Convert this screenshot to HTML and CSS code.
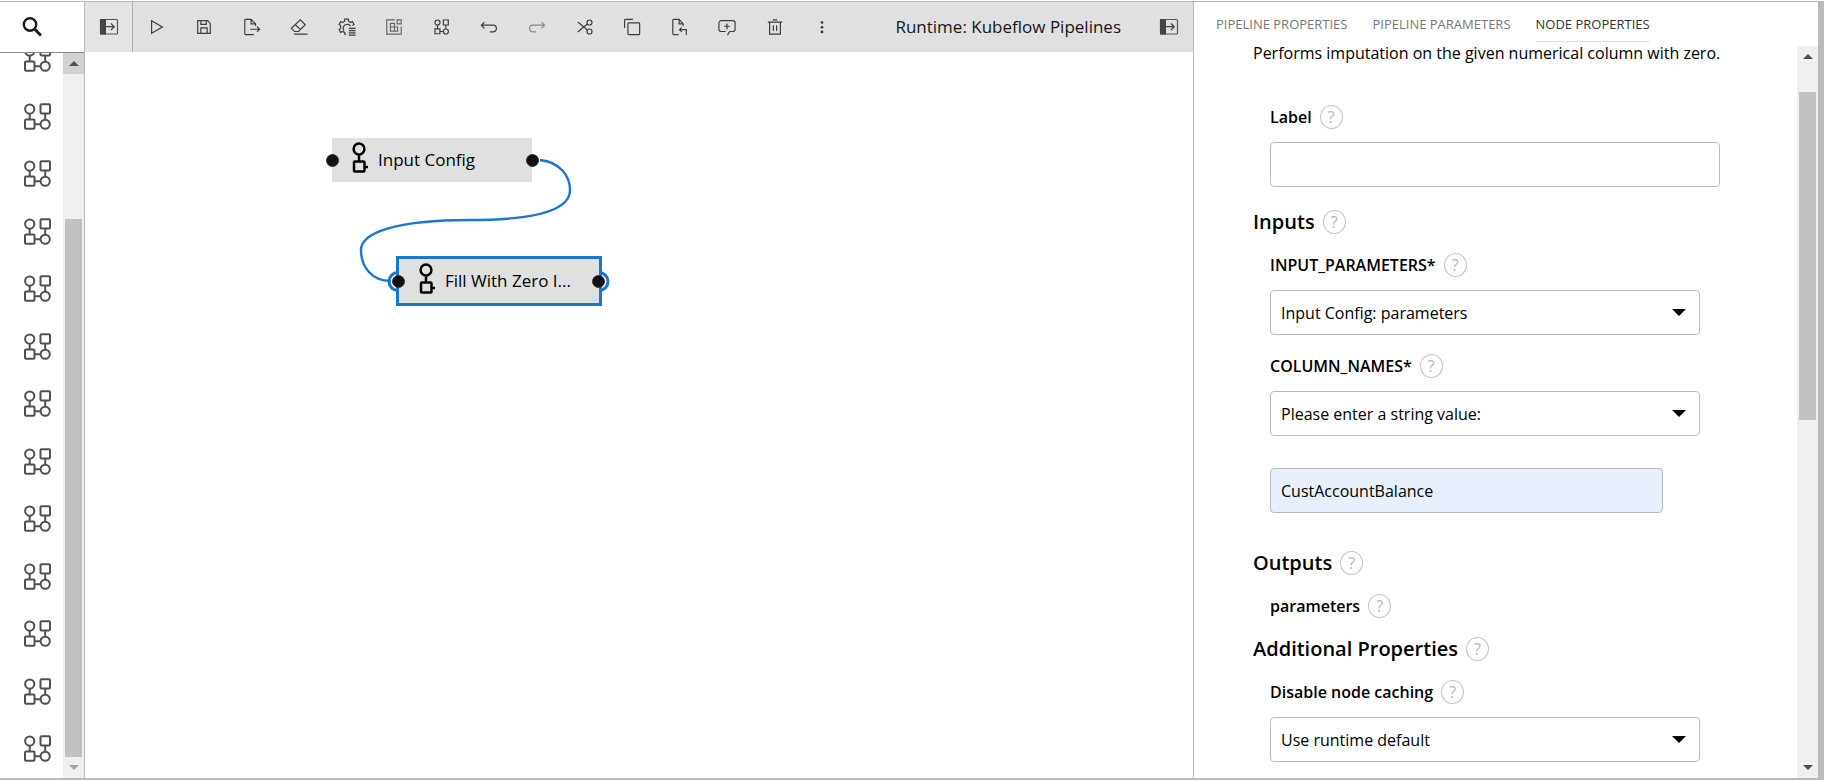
FILE: index.html
```html
<!DOCTYPE html>
<html lang="en">
<head>
<meta charset="utf-8">
<title>Pipeline Editor</title>
<link rel="stylesheet" href="styles.css">
</head>
<body>
<svg class="defs" aria-hidden="true">
  <symbol id="nodes" viewBox="0 0 28 28">
    <g fill="none" stroke="currentColor" stroke-width="2">
      <circle cx="5.700" cy="6.300" r="4.600"/><rect x="16.500" y="1.600" width="9.500" height="9.200" rx="1"/>
      <rect x="1" y="16.800" width="9.500" height="9.200" rx="1"/><circle cx="21.200" cy="21.500" r="4.600"/>
      <path d="M5.700 10.800v6M21.200 10.800v6M10.500 21.500h6"/>
    </g>
  </symbol>
  <symbol id="panel" viewBox="0 0 20 18">
    <rect x="1.500" y="1.500" width="17" height="14.500" rx="1" fill="none" stroke="#555" stroke-width="1.200"/>
    <path d="M1 1h6v15.500H1z" fill="#444"/><path d="M7 8.700h8M12 5.500l3.200 3.200L12 12" fill="none" stroke="#444" stroke-width="1.300"/>
  </symbol>
  <symbol id="op" viewBox="0 0 18 32">
    <g fill="none" stroke="#000" stroke-width="2.500"><circle cx="8" cy="7" r="5.400"/><path d="M8 12.400v7M14 25h3"/><rect x="3" y="19.400" width="10.500" height="10" rx="1"/></g>
  </symbol>
</svg>
<div class="app">
  <aside class="palette">
    <button class="search" aria-label="Search"><svg width="20" height="20" viewBox="0 0 20 20" fill="none" stroke="#1b1b1b"><circle cx="8" cy="7.500" r="6.200" stroke-width="2.400"/><path d="M12.500 12l6.500 6.500" stroke-width="3"/></svg></button>
    <div class="palette-body">
      <div class="palette-list">
        <svg><use href="#nodes"/></svg><svg><use href="#nodes"/></svg><svg><use href="#nodes"/></svg><svg><use href="#nodes"/></svg><svg><use href="#nodes"/></svg><svg><use href="#nodes"/></svg><svg><use href="#nodes"/></svg><svg><use href="#nodes"/></svg><svg><use href="#nodes"/></svg><svg><use href="#nodes"/></svg><svg><use href="#nodes"/></svg><svg><use href="#nodes"/></svg><svg><use href="#nodes"/></svg>
      </div>
      <div class="scrollbar scrollbar-left"><span class="up"></span><span class="before"></span><span class="thumb"></span><span class="down"></span></div>
    </div>
  </aside>

  <main class="editor">
    <header class="toolbar">
      <button class="toggle" aria-label="Toggle palette"><svg width="20" height="18"><use href="#panel"/></svg></button>
      <div class="tools">
        <button aria-label="Run"><svg class="ico" viewBox="0 0 20 20"><path d="M4 3v14l12-7z"/></svg></button>
        <button aria-label="Save"><svg class="ico" viewBox="0 0 20 20"><path d="M3 3h11l3 3v11H3zM6.500 3v4h6V3M6.500 17v-6h7v6"/></svg></button>
        <button aria-label="Export"><svg class="ico" viewBox="0 0 20 20"><path d="M12 18.500H3a1 1 0 0 1-1-1v-15a1 1 0 0 1 1-1h6l5 5V9M9 1.500v5h5M8 12.500h10.500M15.500 9.500l3 3-3 3"/></svg></button>
        <button aria-label="Clear"><svg class="ico" viewBox="0 0 20 20"><path d="M11.500 2l5.500 5.500-7.500 7.500H5L1.500 11.500zM6 7.500l5.700 5.500M4.500 18h15"/></svg></button>
        <button aria-label="Runtimes"><svg class="ico" viewBox="0 0 20 20"><path d="M9 18H7.500v-2L5 15l-2 1-1.800-3L3 11.500v-3L1.200 7 3 4l2 1 2.500-1.500V1.200h4v2L14 5l2-1 1.800 3L16 8.500M6.500 14A4.500 4.500 0 1 1 14 9M12 11.500h7.500M12 14h7.500M12 16.500h7.500M12 19h7.500"/></svg></button>
        <button aria-label="Runtime images"><svg class="ico mid" viewBox="0 0 20 20"><path d="M11 2H2v16h16V9.500M13.500 2H18v4.500h-4.500zM6 6h4.500v4H14v4.500H6zM6 10h4.500v4.500"/></svg></button>
        <button aria-label="Components"><svg class="ico" viewBox="0 0 20 20"><circle cx="5" cy="5" r="2.800"/><path d="M11.500 2.200h5.500v5.600h-5.500zM2.200 12h5.500v5.500H2.200zM5 7.800V12M14.200 7.800V12M7.700 15h3.700"/><circle cx="14.300" cy="15" r="2.800"/></svg></button>
        <button aria-label="Undo"><svg class="ico" viewBox="0 0 20 20"><path d="M5 4.500L1.500 8 5 11.500M1.500 8h13a3.500 3.500 0 0 1 0 7.500H11"/></svg></button>
        <button aria-label="Redo"><svg class="ico soft" viewBox="0 0 20 20"><path d="M15 4.500L18.500 8 15 11.500M18.500 8h-13a3.500 3.500 0 0 0 0 7.500H9"/></svg></button>
        <button aria-label="Cut"><svg class="ico" viewBox="0 0 20 20"><circle cx="15" cy="5" r="2.800"/><circle cx="15" cy="15" r="2.800"/><path d="M2 4.500l10.700 8.800M2 15.500l10.700-8.800"/></svg></button>
        <button aria-label="Copy"><svg class="ico" viewBox="0 0 20 20"><rect x="5.500" y="5.500" width="13" height="13" rx="1"/><path d="M1.800 11V2.500a1 1 0 0 1 1-1H11"/></svg></button>
        <button aria-label="Paste"><svg class="ico" viewBox="0 0 20 20"><path d="M8.500 18.500H3a1 1 0 0 1-1-1v-15a1 1 0 0 1 1-1h6l4.500 5v2.500M9 1.500v5h4.500M12 10.500l-2.500 2.500 2.500 2.500M9.500 13H17v6"/></svg></button>
        <button aria-label="Add comment"><svg class="ico" viewBox="0 0 20 20"><path d="M8.500 15H3.500A2.500 2.500 0 0 1 1 12.500v-7A2.500 2.500 0 0 1 3.500 3h13A2.500 2.500 0 0 1 19 5.500v7a2.500 2.500 0 0 1-2.500 2.500H13l-2.500 4M10 6v6.500M6.800 9.200h6.500"/></svg></button>
        <button aria-label="Delete"><svg class="ico" viewBox="0 0 20 20"><path d="M2 4.500h16M4 4.500V18h12V4.500M7.500 2h5M8.200 8v6.500M11.800 8v6.500"/></svg></button>
        <button aria-label="More"><svg class="ico dots" viewBox="0 0 20 20"><circle cx="10" cy="5" r="1.500"/><circle cx="10" cy="10.300" r="1.500"/><circle cx="10" cy="15.500" r="1.500"/></svg></button>
      </div>
      <span class="runtime">Runtime: Kubeflow Pipelines</span>
      <button class="toggle-right" aria-label="Toggle properties"><svg width="20" height="18"><use href="#panel"/></svg></button>
    </header>
    <div class="canvas">
      <div class="node node-input"><svg width="18" height="32"><use href="#op"/></svg><span>Input Config</span></div>
      <div class="node node-fill"><svg width="18" height="32"><use href="#op"/></svg><span>Fill With Zero I...</span></div>
      <svg class="links" width="560" height="300">
        <g fill="none" stroke="#1976d2">
          <path stroke-width="2.400" d="M455 107C475 109 485 123 485 137C485 156 455 167 385 167C310 167 276 180 276 197C276 213 286 228 306 228"/>
          <path stroke-width="3" d="M313 219.500A9 9 0 0 0 313 237.500M514 219.500A9 9 0 0 1 514 237.500"/>
        </g>
        <g fill="#111" stroke="#333"><circle cx="247.500" cy="107.500" r="6"/><circle cx="447.500" cy="107.500" r="6"/><circle cx="313.500" cy="228.500" r="6"/><circle cx="513.500" cy="228.500" r="6"/></g>
      </svg>
    </div>
  </main>

  <aside class="properties">
    <nav class="tabs"><button>PIPELINE PROPERTIES</button><button>PIPELINE PARAMETERS</button><button class="active">NODE PROPERTIES</button></nav>
    <div class="prop-body">
      <form class="form">
        <p class="desc">Performs imputation on the given numerical column with zero.</p>
        <div class="row indent first"><label for="label">Label</label><button type="button" class="help">?</button></div>
        <input id="label" class="field wide" type="text">
        <div class="row section"><h2>Inputs</h2><button type="button" class="help">?</button></div>
        <div class="row indent"><label for="inp">INPUT_PARAMETERS*</label><button type="button" class="help">?</button></div>
        <div class="select"><select id="inp" class="field"><option>Input Config: parameters</option></select></div>
        <div class="row indent"><label for="col">COLUMN_NAMES*</label><button type="button" class="help">?</button></div>
        <div class="select"><select id="col" class="field"><option>Please enter a string value:</option></select></div>
        <input class="field filled" type="text" value="CustAccountBalance" aria-label="Column names value">
        <div class="row outputs"><h2>Outputs</h2><button type="button" class="help">?</button></div>
        <div class="row indent"><h3>parameters</h3><button type="button" class="help">?</button></div>
        <div class="row"><h2>Additional Properties</h2><button type="button" class="help">?</button></div>
        <div class="row indent"><label for="cache">Disable node caching</label><button type="button" class="help">?</button></div>
        <div class="select"><select id="cache" class="field"><option>Use runtime default</option></select></div>
      </form>
      <div class="scrollbar scrollbar-right"><span class="up"></span><span class="before"></span><span class="thumb"></span><span class="after"></span><span class="down"></span></div>
    </div>
  </aside>
</div>
</body>
</html>
```
FILE: styles.css
```css
* { box-sizing: border-box; }
body {
  margin: 0;
  background: #fff;
  color: #000;
  font: 16px/24px "Open Sans", "Noto Sans", sans-serif;
}
button { padding: 0; border: 0; background: none; font: inherit; color: inherit; }
h2, h3, p { margin: 0; }
.defs { position: absolute; width: 0; height: 0; }

.app {
  display: grid;
  grid-template-columns: 85px minmax(0, 1fr) 631px;
  height: 100vh;
  padding-top: 1px;
  border-bottom: 2px solid #bbb;
}
.palette, .editor, .properties {
  display: flex;
  flex-direction: column;
  min-height: 0;
  border-top: 1px solid #b4b8b6;
}

/* Palette */
.palette { border-right: 1px solid #b8b8b8; }
.search {
  display: flex;
  flex: none;
  align-items: center;
  justify-content: center;
  height: 51px;
  padding-right: 20px;
  border-bottom: 1px solid #888;
}
.palette-body { display: flex; flex: 1; min-height: 0; overflow: hidden; }
.palette-list {
  display: flex;
  flex: 1;
  flex-direction: column;
  margin-top: -23px;
  padding-left: 24px;
}
.palette-list svg { flex: 1; width: 28px; min-height: 0; color: #505050; }

/* Scrollbars */
.scrollbar { display: flex; flex: none; flex-direction: column; width: 21px; background: #f0f0f0; }
.up, .down { display: flex; flex: none; align-items: center; justify-content: center; height: 21px; }
.up::before, .down::before { content: ""; border: 5px solid transparent; }
.up::before { border-top: 0; border-bottom-color: #505050; }
.down::before { border-bottom: 0; border-top-color: #505050; }
.thumb { margin: 0 2px; background: #c1c1c1; }
.scrollbar-left .up { background: #d2d2d2; }
.scrollbar-left .down::before { border-top-color: #a3a3a3; }
.scrollbar-left .before { flex: 145; }
.scrollbar-left .thumb { flex: 538; }
.scrollbar-right .before { flex: 25; }
.scrollbar-right .thumb { flex: 328; }
.scrollbar-right .after { flex: 337; }

/* Toolbar */
.toolbar { display: flex; flex: none; align-items: center; height: 50px; background: #e0e0e0; }
.toolbar button { display: flex; align-items: center; justify-content: center; height: 50px; }
.toolbar .toggle { width: 48px; border-right: 1px solid #b0b0b0; background: #e4e4e4; }
.tools { display: flex; width: 713px; }
.tools button { flex: 1; }
.ico { width: 18px; height: 18px; fill: none; stroke: #3c3c3c; stroke-width: 1.3; overflow: visible; }
.mid { stroke: #666; }
.soft { stroke: #888; }
.dots { fill: #333; stroke: none; }
.runtime { margin-left: auto; color: #161616; font-size: 17px; }
.toggle-right { width: 48px; margin-left: 24px; }

/* Canvas */
.canvas { position: relative; flex: 1; overflow: hidden; }
.links { position: absolute; top: 1px; left: 0; }
.node {
  position: absolute;
  display: flex;
  align-items: center;
  gap: 9px;
  height: 44px;
  background: #e0e0e0;
  font-size: 17px;
  white-space: nowrap;
}
.node svg { flex: none; margin-top: -4px; }
.node-input { top: 86px; left: 247px; width: 200px; padding-left: 19px; }
.node-fill { top: 204px; left: 311px; width: 206px; height: 50px; padding-left: 19px; border: 3px solid #1976d2; }

/* Properties */
.properties { border-right: 6px solid #bbb; border-left: 1px solid #b8b8b8; }
.tabs { display: flex; flex: none; gap: 25px; height: 44px; padding-left: 22px; color: #777; font-size: 13px; }
.tabs button { height: 40px; padding-top: 4px; border-bottom: 1px solid transparent; }
.tabs .active { border-bottom-color: #e0e0e0; color: #333; }
.prop-body { display: flex; flex: 1; min-height: 0; }
.form { display: flex; flex: 1; flex-direction: column; min-width: 0; padding: 0 77px 0 59px; }
.desc { flex: none; height: 24px; line-height: 14px; white-space: nowrap; }
.row { display: flex; flex: none; align-items: center; gap: 8px; height: 24px; margin-top: 19px; }
.indent { padding-left: 17px; }
.first { margin-top: 35px; }
.section { margin-top: 23px; }
.outputs { margin-top: 38px; }
.row label, h3 { font-size: 16px; font-weight: 600; }
h2 { font-size: 20px; font-weight: 600; }
.help { width: 23px; height: 24px; border: 1px solid #c4c4c4; border-radius: 50%; color: #b8b8b8; line-height: 20px; }
.field {
  flex: none;
  width: 100%;
  height: 45px;
  padding: 0 10px;
  border: 1px solid #bbb;
  border-radius: 4px;
  background: #fff;
  color: #000;
  font: inherit;
  appearance: none;
}
.wide { width: auto; margin: 13px 0 0 17px; }
.filled { width: auto; margin: 32px 57px 0 17px; background: #e8f0fe; }
.select { position: relative; flex: none; margin: 13px 20px 0 17px; }
.select .field { display: block; }
.select::after {
  content: "";
  position: absolute;
  top: 19px;
  right: 14px;
  border: 7px solid transparent;
  border-top-color: #000;
  border-bottom: 0;
  pointer-events: none;
}
```
